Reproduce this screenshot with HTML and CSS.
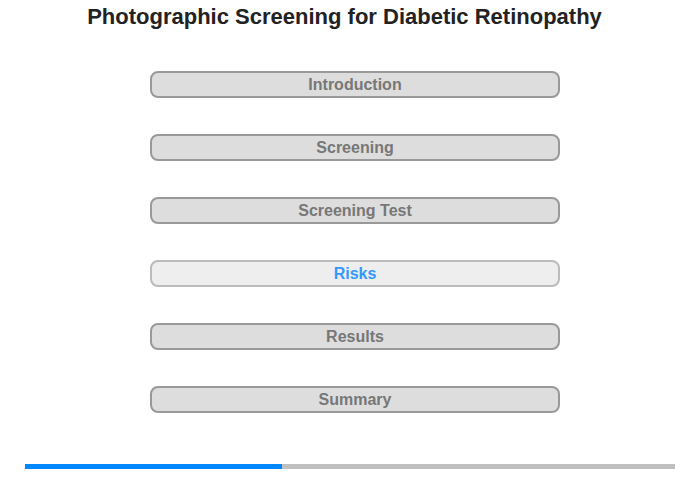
FILE: index.html
```html
<!DOCTYPE html>
<html>
<head>
<meta charset="utf-8">
<link rel="stylesheet" href="styles.css">
</head>
<body>
<div class="page">
  <h1 class="title">Photographic Screening for Diabetic Retinopathy</h1>
  <nav class="menu">
    <div class="item">Introduction</div>
    <div class="item">Screening</div>
    <div class="item">Screening Test</div>
    <div class="item active">Risks</div>
    <div class="item">Results</div>
    <div class="item">Summary</div>
  </nav>
  <div class="progress"><div class="fill" style="width:39.6%"></div></div>
</div>
</body>
</html>
```
FILE: styles.css
```css
html, body { margin: 0; padding: 0; background: #fff; }
body { font-family: "Liberation Sans", Arial, sans-serif; }
.page { width: 700px; height: 480px; display: flex; flex-direction: column; }
.title {
  margin: 4px 0 0 -11px;
  font-size: 22px;
  font-weight: bold;
  color: #222;
  text-align: center;
  line-height: 25px;
}
.menu {
  margin: 42px 0 0 150px;
  width: 410px;
  display: flex;
  flex-direction: column;
  gap: 36px;
}
.item {
  box-sizing: border-box;
  height: 27px;
  border: 2px solid #999;
  border-radius: 8px;
  background: #ddd;
  color: #777;
  font-size: 16px;
  font-weight: bold;
  line-height: 24px;
  text-align: center;
}
.item.active {
  background: #eee;
  border-color: #bbb;
  color: #3399ff;
}
.progress {
  margin: 51px 0 0 25px;
  width: 650px;
  height: 5px;
  background: #c0c0c0;
}
.fill { height: 100%; background: #0088ff; }
```
